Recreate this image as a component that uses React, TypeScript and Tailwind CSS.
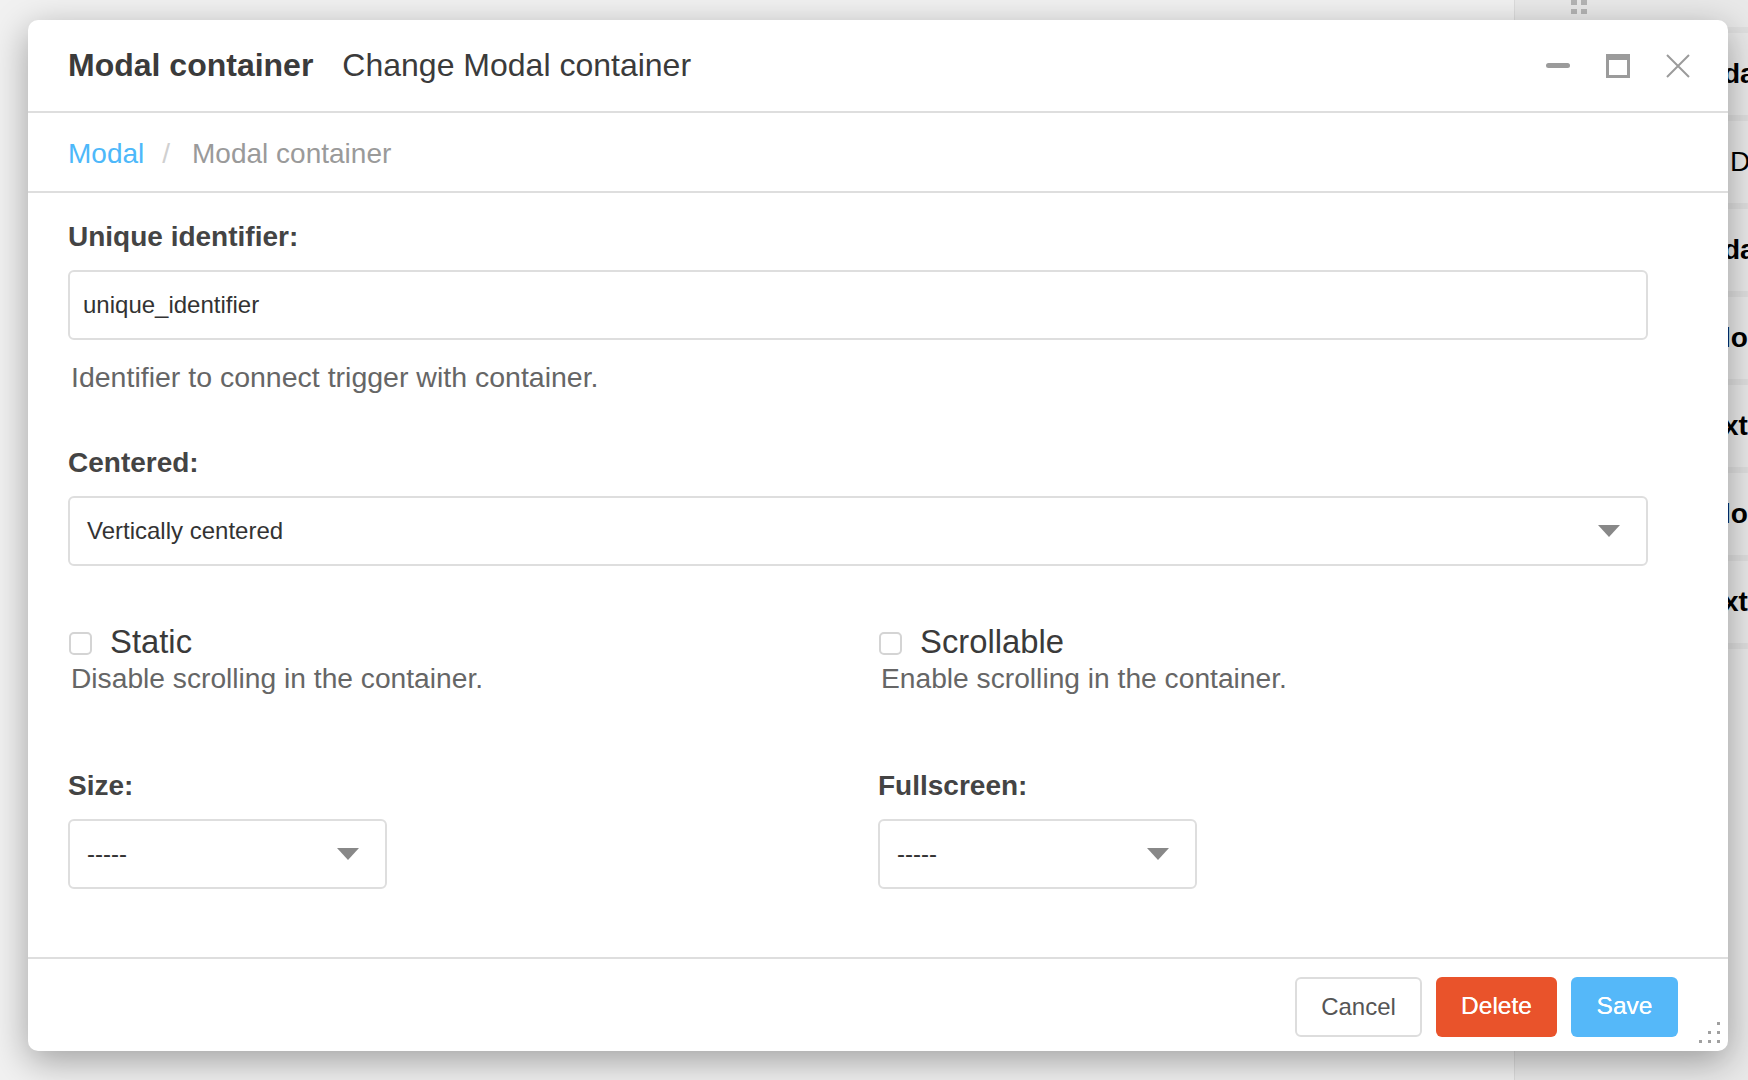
import React from 'react';

const sideRows = ['data', 'D', 'data', 'lo', 'xt', 'lo', 'xt'];

function Caret() {
  return (
    <svg width="22" height="12" viewBox="0 0 22 12" className="shrink-0">
      <path d="M0 0 H22 L11 12 Z" fill="#888" />
    </svg>
  );
}

function SelectBox({ value, className }: { value: string; className: string }) {
  return (
    <div
      className={
        'h-[70px] border-2 border-[#dedede] rounded-[6px] bg-white flex items-center justify-between pl-[17px] pr-[26px] text-[24px] text-[#333] ' +
        className
      }
    >
      <span>{value}</span>
      <Caret />
    </div>
  );
}

function CheckField({ label, help }: { label: string; help: string }) {
  return (
    <div className="flex flex-col">
      <div className="flex items-center gap-[18px] h-[38px]">
        <div className="w-[23px] h-[23px] border-2 border-[#d4d4d4] rounded-[5px] bg-white mt-[3px] ml-[1px]" />
        <span className="text-[32.8px] leading-[38px] text-[#3a3a3a]">{label}</span>
      </div>
      <div className="text-[28.2px] leading-[34px] text-[#666] pl-[3px]">{help}</div>
    </div>
  );
}

function WindowButtons() {
  return (
    <div className="flex items-center gap-[36px]">
      <div className="w-[24px] h-[24px] flex items-center">
        <div className="w-[24px] h-[5px] rounded-full bg-[#9b9b9b]" />
      </div>
      <div className="w-[24px] h-[24px] border-[#9b9b9b] border-t-[6px] border-x-[3px] border-b-[3px]" />
      <svg width="24" height="24" viewBox="0 0 24 24">
        <path d="M1 1 L23 23 M23 1 L1 23" stroke="#9b9b9b" strokeWidth="2" fill="none" />
      </svg>
    </div>
  );
}

export default function App() {
  return (
    <div className="relative w-[1748px] h-[1080px] overflow-hidden bg-[#f1f1f1] font-['Liberation_Sans',Arial,sans-serif]">
      {/* background page: sidebar peeking out on the right */}
      <div className="absolute left-[1514px] top-0 w-[234px] h-full bg-[#e9e9e9] border-l border-[#dcdcdc] flex flex-col">
        <div className="h-[27px] flex items-start pl-[56px]">
          <div className="grid grid-cols-2 gap-[4px]">
            <div className="w-[6px] h-[5px] bg-[#b4b4b4]" />
            <div className="w-[6px] h-[5px] bg-[#b4b4b4]" />
            <div className="w-[6px] h-[5px] bg-[#b4b4b4]" />
            <div className="w-[6px] h-[5px] bg-[#b4b4b4]" />
          </div>
        </div>
        <div className="h-[6px] bg-[#e0e0e0]" />
        {sideRows.map((t, i) => (
          <div key={i} className="flex flex-col">
            <div className="h-[82px] flex items-center pl-[208px] text-[28px] font-bold text-black whitespace-nowrap">
              {t === 'D' ? <span className="pl-[7px] font-normal">D</span> : t}
            </div>
            <div className="h-[6px] bg-[#dfdfdf]" />
          </div>
        ))}
      </div>

      {/* modal */}
      <div className="absolute left-[28px] top-[20px] w-[1700px] h-[1031px] bg-white rounded-[10px] shadow-[0_10px_36px_rgba(0,0,0,0.34)] flex flex-col">
        <div className="h-[93px] shrink-0 border-b-2 border-[#dedede] flex items-center justify-between pl-[40px] pr-[38px]">
          <div className="flex items-center text-[32px] text-[#3b3b3b] -mt-[2px]">
            <span className="font-bold">Modal container</span>
            <span className="ml-[29px]">Change Modal container</span>
          </div>
          <WindowButtons />
        </div>

        <div className="h-[80px] shrink-0 border-b-2 border-[#dedede] flex items-center pl-[40px] pt-[4px] text-[28px]">
          <span className="text-[#4db8fa]">Modal</span>
          <span className="text-[#d0d0d0] pl-[18px] pr-[22px]">/</span>
          <span className="text-[#9a9a9a]">Modal container</span>
        </div>

        <div className="flex-1 flex flex-col pl-[40px] pr-[80px] pt-[27px]">
          <div className="text-[28px] leading-[34px] font-bold text-[#444]">Unique identifier:</div>
          <div className="mt-[16px] h-[70px] border-2 border-[#dedede] rounded-[6px] flex items-center pl-[13px] text-[24px] text-[#333]">
            unique_identifier
          </div>
          <div className="mt-[20px] text-[28.5px] leading-[34px] text-[#666] pl-[3px]">
            Identifier to connect trigger with container.
          </div>

          <div className="mt-[52px] text-[28px] leading-[34px] font-bold text-[#444]">Centered:</div>
          <SelectBox value="Vertically centered" className="mt-[16px] w-full" />

          <div className="mt-[57px] grid grid-cols-[810px_1fr]">
            <CheckField label="Static" help="Disable scrolling in the container." />
            <CheckField label="Scrollable" help="Enable scrolling in the container." />
          </div>

          <div className="mt-[74px] grid grid-cols-[810px_1fr]">
            <div className="flex flex-col">
              <div className="text-[28px] leading-[34px] font-bold text-[#444]">Size:</div>
              <SelectBox value="-----" className="mt-[16px] w-[319px]" />
            </div>
            <div className="flex flex-col">
              <div className="text-[28px] leading-[34px] font-bold text-[#444]">Fullscreen:</div>
              <SelectBox value="-----" className="mt-[16px] w-[319px]" />
            </div>
          </div>
        </div>

        <div className="relative h-[94px] shrink-0 border-t-2 border-[#dedede] flex items-center justify-end gap-[14px] pr-[50px] pt-[3px]">
          <button className="w-[127px] h-[60px] border-2 border-[#dddddd] rounded-[6px] bg-white text-[24px] text-[#555]">
            Cancel
          </button>
          <button className="w-[121px] h-[60px] rounded-[6px] bg-[#e9532b] text-[24.5px] text-white [text-shadow:0_0_0.4px_#fff]">
            Delete
          </button>
          <button className="w-[107px] h-[60px] rounded-[6px] bg-[#55b8f9] text-[24.5px] text-white [text-shadow:0_0_0.4px_#fff]">
            Save
          </button>
          {/* resize grip */}
          <div className="absolute right-[8px] bottom-[8px] grid grid-cols-3 gap-[6px]">
            <div className="w-[3px] h-[3px]" />
            <div className="w-[3px] h-[3px]" />
            <div className="w-[3px] h-[3px] bg-[#a0a0a0]" />
            <div className="w-[3px] h-[3px]" />
            <div className="w-[3px] h-[3px] bg-[#a0a0a0]" />
            <div className="w-[3px] h-[3px] bg-[#a0a0a0]" />
            <div className="w-[3px] h-[3px] bg-[#a0a0a0]" />
            <div className="w-[3px] h-[3px] bg-[#a0a0a0]" />
            <div className="w-[3px] h-[3px] bg-[#a0a0a0]" />
          </div>
        </div>
      </div>
    </div>
  );
}
